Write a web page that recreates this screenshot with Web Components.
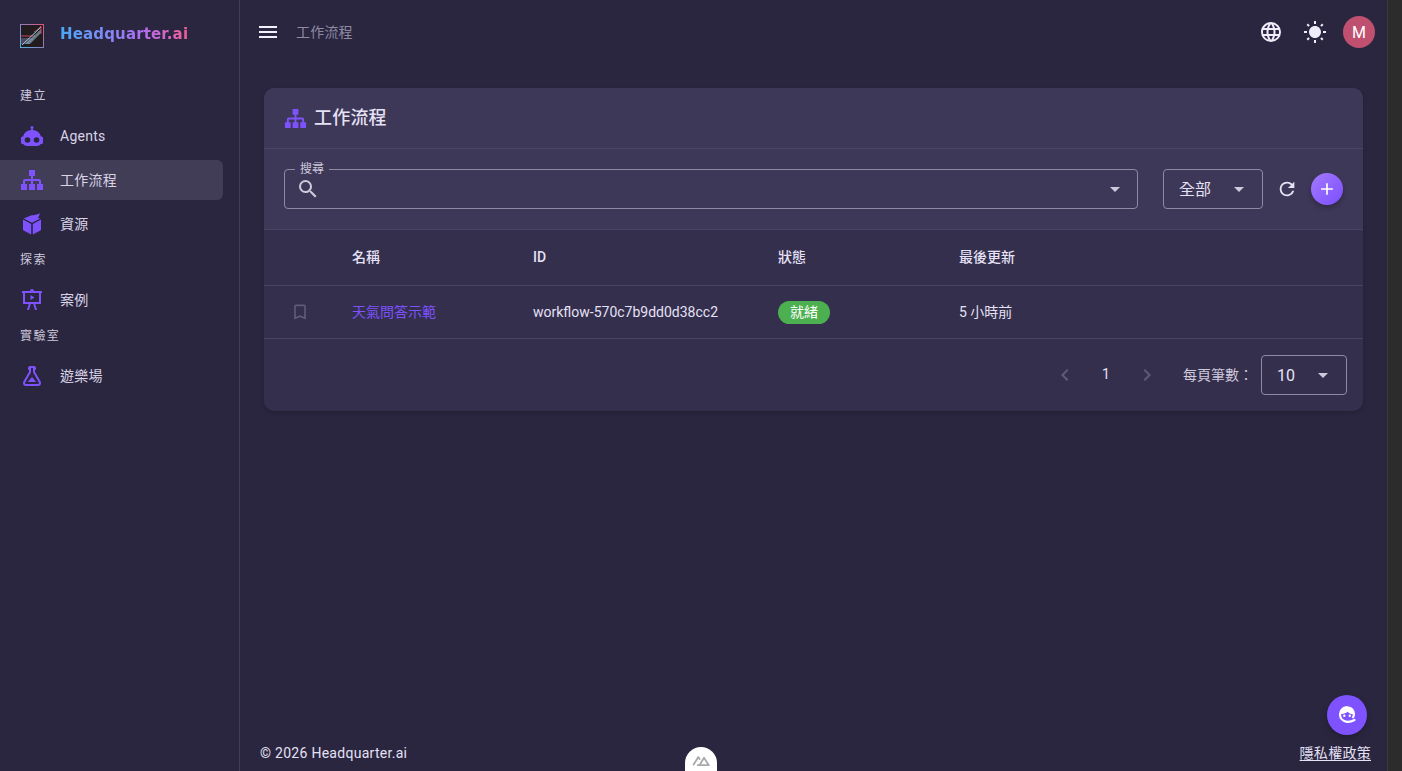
<!DOCTYPE html>
<html lang="zh-Hant"><head><meta charset="utf-8"><title>工作流程</title>
<style>
html,body{margin:0;height:100%;overflow:hidden;background:#2a2640}
body{font-family:Roboto,"Noto Sans CJK TC",sans-serif;color:#e6e1f5}
</style></head><body>
<app-shell>
  <side-nav slot="nav"></side-nav>
  <top-bar slot="top"></top-bar>
  <workflow-card slot="main"></workflow-card>
  <page-footer slot="footer"></page-footer>
</app-shell>
<script>
const P={
 sitemap:"M9,2V8H11V11H5C3.89,11 3,11.89 3,13V16H1V22H7V16H5V13H11V16H9V22H15V16H13V13H19V16H17V22H23V16H21V13C21,11.89 20.1,11 19,11H13V8H15V2H9Z",
 robot:"M12,2A1.5,1.5 0 0,1 13.5,3.5C13.5,4 13.2,4.5 12.8,4.8V6.1C17,6.5 20.2,9.2 20.8,12.5H21.5A1.5,1.5 0 0,1 23,14V18.5A1.5,1.5 0 0,1 21.5,20H20.8C20,21.3 18.5,22 17,22H7C5.5,22 4,21.3 3.2,20H2.5A1.5,1.5 0 0,1 1,18.5V14A1.5,1.5 0 0,1 2.5,12.5H3.2C3.8,9.2 7,6.5 11.2,6.1V4.8C10.8,4.5 10.5,4 10.5,3.5A1.5,1.5 0 0,1 12,2M7.5,13.2A2.8,2.8 0 1,0 7.5,18.8A2.8,2.8 0 1,0 7.5,13.2M16.5,13.2A2.8,2.8 0 1,0 16.5,18.8A2.8,2.8 0 1,0 16.5,13.2Z",
 cube:"M3,7.6L11.2,12V22.6L3.6,18.6C3.2,18.4 3,18 3,17.6V7.6M21,7.6V17.6C21,18 20.8,18.4 20.4,18.6L12.8,22.6V12L21,7.6M11.5,3.2C14,3.2 17,2.8 20,1.2C19.6,3 18.8,4.6 17.8,5.8L20.2,6.4L12,10.7L3.8,6.4L11.5,3.2Z",
 present:"M2,3H10A2,2 0 0,1 12,1A2,2 0 0,1 14,3H22V5H21V16H15.25L17,22H15L13.25,16H10.75L9,22H7L8.75,16H3V5H2V3M5,5V14H19V5H5M10.5,7L14.5,9.5L10.5,12V7Z",
 flask:"M5,19A1,1 0 0,0 6,20H18A1,1 0 0,0 19,19C19,18.79 18.93,18.59 18.82,18.43L13,8.35V4H11V8.35L5.18,18.43C5.07,18.59 5,18.79 5,19M6,22A3,3 0 0,1 3,19C3,18.4 3.18,17.84 3.5,17.37L9,7.81V6A1,1 0 0,1 8,5V4A2,2 0 0,1 10,2H14A2,2 0 0,1 16,4V5A1,1 0 0,1 15,6V7.81L20.5,17.37C20.82,17.84 21,18.4 21,19A3,3 0 0,1 18,22H6M12,13L16.27,18H7.73L12,13Z",
 menu:"M3,6H21V8H3V6M3,11H21V13H3V11M3,16H21V18H3V16Z",
 web:"M16.36,14C16.44,13.34 16.5,12.68 16.5,12C16.5,11.32 16.44,10.66 16.36,10H19.74C19.9,10.64 20,11.31 20,12C20,12.69 19.9,13.36 19.74,14M14.59,19.56C15.19,18.45 15.65,17.25 15.97,16H18.92C17.96,17.65 16.43,18.93 14.59,19.56M14.34,14H9.66C9.56,13.34 9.5,12.68 9.5,12C9.5,11.32 9.56,10.65 9.66,10H14.34C14.43,10.65 14.5,11.32 14.5,12C14.5,12.68 14.43,13.34 14.34,14M12,19.96C11.17,18.76 10.5,17.43 10.09,16H13.91C13.5,17.43 12.83,18.76 12,19.96M8,8H5.08C6.03,6.34 7.57,5.06 9.4,4.44C8.8,5.55 8.35,6.75 8,8M5.08,16H8C8.35,17.25 8.8,18.45 9.4,19.56C7.57,18.93 6.03,17.65 5.08,16M4.26,14C4.1,13.36 4,12.69 4,12C4,11.31 4.1,10.64 4.26,10H7.64C7.56,10.66 7.5,11.32 7.5,12C7.5,12.68 7.56,13.34 7.64,14M12,4.03C12.83,5.23 13.5,6.57 13.91,8H10.09C10.5,6.57 11.17,5.23 12,4.03M18.92,8H15.97C15.65,6.75 15.19,5.55 14.59,4.44C16.43,5.07 17.96,6.34 18.92,8M12,2C6.47,2 2,6.5 2,12A10,10 0 0,0 12,22A10,10 0 0,0 22,12A10,10 0 0,0 12,2Z",
 sun:"M3.55 19.09L4.96 20.5L6.76 18.71L5.34 17.29M12 6C8.69 6 6 8.69 6 12S8.69 18 12 18 18 15.31 18 12C18 8.68 15.31 6 12 6M20 13H23V11H20M17.24 18.71L19.04 20.5L20.45 19.09L18.66 17.29M20.45 5L19.04 3.6L17.24 5.39L18.66 6.81M13 1H11V4H13M6.76 5.39L4.96 3.6L3.55 5L5.34 6.81L6.76 5.39M1 13H4V11H1M13 20H11V23H13",
 refresh:"M17.65,6.35C16.2,4.9 14.21,4 12,4A8,8 0 0,0 4,12A8,8 0 0,0 12,20C15.73,20 18.84,17.45 19.73,14H17.65C16.83,16.33 14.61,18 12,18A6,6 0 0,1 6,12A6,6 0 0,1 12,6C13.66,6 15.14,6.69 16.22,7.78L13,11H20V4L17.65,6.35Z",
 search:"M9.5,3A6.5,6.5 0 0,1 16,9.5C16,11.11 15.41,12.59 14.44,13.73L14.71,14H15.5L20.5,19L19,20.5L14,15.5V14.71L13.73,14.44C12.59,15.41 11.11,16 9.5,16A6.5,6.5 0 0,1 3,9.5A6.5,6.5 0 0,1 9.5,3M9.5,5C7,5 5,7 5,9.5C5,12 7,14 9.5,14C12,14 14,12 14,9.5C14,7 12,5 9.5,5Z",
 bookmark:"M17,18L12,15.82L7,18V5H17M17,3H7A2,2 0 0,0 5,5V21L12,18L19,21V5C19,3.89 18.1,3 17,3Z",
 down:"M7,10L12,15L17,10H7Z",
 left:"M15.41,16.58L10.83,12L15.41,7.41L14,6L8,12L14,18L15.41,16.58Z",
 right:"M8.59,16.58L13.17,12L8.59,7.41L10,6L16,12L10,18L8.59,16.58Z",
 plus:"M19,13H13V19H11V13H5V11H11V5H13V11H19V13Z"
};
const ic=(n,s,c='currentColor')=>`<svg width="${s}" height="${s}" viewBox="0 0 24 24" fill="${c}" style="display:block;flex:none"><path d="${P[n]}"/></svg>`;
function def(name,html){customElements.define(name,class extends HTMLElement{
  constructor(){super();this.attachShadow({mode:'open'}).innerHTML=typeof html==='function'?html(this):html}
});}
const ACC='#7e52ff', LINE='#4a4464', HEAD='#3e3858';

def('app-shell',`<style>
:host{display:flex;height:771px;width:1402px;overflow:hidden;position:relative;background:#2a2640}
.nav{width:240px;flex:none;box-sizing:border-box;border-right:1px solid #423d58}
.col{flex:1;min-width:0;display:flex;flex-direction:column}
.main{padding:24px 24px 0;flex:1}
.bar{width:15px;flex:none;box-sizing:border-box;background:#2c2c2c;border-left:1px solid #3a3a3a}
</style>
<div class="nav"><slot name="nav"></slot></div>
<div class="col"><slot name="top"></slot><div class="main"><slot name="main"></slot></div><slot name="footer"></slot></div>
<div class="bar"></div>
<help-fab></help-fab><nuxt-badge></nuxt-badge>`);

def('help-fab',`<style>
:host{position:absolute;left:1327px;top:695px;width:40px;height:40px;border-radius:50%;background:${ACC};display:flex;align-items:center;justify-content:center;box-shadow:0 3px 6px rgba(0,0,0,.25)}
</style><svg width="24" height="24" viewBox="0 0 24 24" style="display:block"><path d="M12,4.300C7.800,4.300 5,7.500 5,11.500C5,15.200 7.800,18.300 12,18.800" fill="none" stroke="#fff" stroke-width="2.200"/><path d="M12,3.200C16.800,3.200 20,6.800 20,11C20,12.800 19.400,14.300 18.400,15.500L16.600,14.500C17.600,13.500 17.800,12.300 17.800,11.300C15.700,11 13.900,10 12.600,8.700C11,10 9.300,10.800 6.400,11L5,11C5,6.800 8,3.200 12,3.200Z" fill="#fff"/><circle cx="9.300" cy="12.800" r="1.200" fill="#fff"/><circle cx="14.800" cy="12.800" r="1.200" fill="#fff"/><path d="M12,18.800C14.500,19 17,18.400 19.500,17" fill="none" stroke="#fff" stroke-width="2.200" stroke-linecap="round"/></svg>`);
def('nuxt-badge',`<style>
:host{position:absolute;left:685px;top:747px;width:32px;height:24px;border-radius:16px 16px 0 0;background:#fff;display:flex;justify-content:center;padding-top:8px;box-sizing:border-box}
</style><svg width="18" height="12" viewBox="0 0 18 12" fill="none" stroke="#aaa" stroke-width="1.8" stroke-linejoin="round"><path d="M1.2,10.2L6.3,2.1L8,4.8M5,10.2H16.8L12,2.8L7.5,10.2"/></svg>`);

def('brand-logo',`<style>
:host{display:flex;align-items:center;gap:16px;height:72px;padding-left:20px}
.t{font:700 15px/20px "DejaVu Sans",sans-serif;background:linear-gradient(90deg,#4aa8f5 0%,#7b8cf5 32%,#b06ef0 65%,#f55f96 100%);-webkit-background-clip:text;background-clip:text;color:transparent;letter-spacing:.15px;padding-bottom:5px}
</style>
<svg width="24" height="24" viewBox="0 0 24 24" style="flex:none"><defs><linearGradient id="g" x1="0" y1="1" x2="1" y2="0"><stop offset="0" stop-color="#52b4e0"/><stop offset=".5" stop-color="#8a7fc0"/><stop offset="1" stop-color="#e0557f"/></linearGradient></defs>
<rect x=".5" y=".5" width="23" height="23" fill="#211c1e" stroke="url(#g)"/>
<path d="M1,12H15" stroke="#c9455f" stroke-width="1"/><path d="M1,15H13M1,17H11M1,19H9" stroke="#8f8fc0" stroke-width=".8" fill="none"/>
<path d="M2,21L21,3" stroke="#a9d3e6" stroke-width="1"/><path d="M5,20L21,5V9L10,20Z" fill="#9fc6d8" opacity=".55"/><path d="M14,8C17,6 19,4 21,2V10" stroke="#c9556f" stroke-width=".8" fill="none"/></svg>
<span class="t">Headquarter.ai</span>`);

def('nav-label',`<style>:host{display:block;height:22px;line-height:25px;padding-left:20px;font-size:12px;letter-spacing:1.4px;color:#cfc9dc}</style><slot></slot>`);
def('nav-item',el=>`<style>
:host{display:flex;align-items:center;height:40px;width:223px;box-sizing:border-box;padding-left:20px;gap:16px;font-size:14px;letter-spacing:.25px;color:#d9d4e6;border-radius:0 6px 6px 0}
:host([active]){background:#423d56}
:host(:not([latin])) span{padding-bottom:2px}
</style>${ic(el.getAttribute('icon'),24,ACC)}<span><slot></slot></span>`);
def('side-nav',`<style>
:host{display:block}
.l{display:flex;flex-direction:column;gap:4px;padding-top:12px}
nav-label{margin-bottom:6px}
</style>
<brand-logo></brand-logo>
<div class="l">
<nav-label>建立</nav-label>
<nav-item icon="robot" latin>Agents</nav-item>
<nav-item icon="sitemap" active>工作流程</nav-item>
<nav-item icon="cube">資源</nav-item>
<nav-label>探索</nav-label>
<nav-item icon="present">案例</nav-item>
<nav-label>實驗室</nav-label>
<nav-item icon="flask">遊樂場</nav-item>
</div>`);

def('top-bar',`<style>
:host{display:flex;align-items:center;height:64px;flex:none;padding:0 12px 0 16px;color:#f0ecfa}
.c{margin-left:16px;font-size:14px;color:#8f8aa3;letter-spacing:.2px;padding-bottom:2px}
.sp{flex:1}
.a{width:32px;height:32px;border-radius:50%;background:#bf5070;color:#fff;display:flex;align-items:center;justify-content:center;font-size:16px}
.r{display:flex;align-items:center}
</style>${ic('menu',24,'#f4f1fb')}<span class="c">工作流程</span><span class="sp"></span>
<div class="r">${ic('web',24)}<span style="width:20px"></span>${ic('sun',24)}<span style="width:16px"></span><div class="a">M</div></div>`);

def('outlined-select',el=>`<style>
:host{display:flex;align-items:center;box-sizing:border-box;height:40px;border:1px solid #8f8aa3;border-radius:4px;padding:0 11px 0 15px;font-size:16px;color:#e6e1f5;justify-content:space-between}
:host([cjk]) span{padding-bottom:2px}
</style><span><slot></slot></span>${ic('down',24,'#cfc9dc')}`);

def('search-field',`<style>
:host{display:flex;flex:1;align-items:center;position:relative;box-sizing:border-box;height:40px;border:1px solid #8f8aa3;border-radius:4px;padding:0 10px 0 11px;justify-content:space-between}
.lb{position:absolute;left:10px;top:-9px;padding:0 5px;background:${HEAD};font-size:12px;line-height:16px;color:#cfc9dc}
svg{color:#cfc9dc}
</style><span class="lb">搜尋</span>${ic('search',24)}${ic('down',24,'#cfc9dc')}`);

def('workflow-card',`<style>
:host{display:block;border-radius:10px;overflow:hidden;background:#342f4d;box-shadow:0 2px 4px rgba(0,0,0,.18);width:1099px}
.h{height:61px;box-sizing:border-box;background:${HEAD};display:flex;align-items:center;padding-left:20px;gap:7px;font-size:18px;font-weight:500;letter-spacing:.2px;color:#e6e1f5;border-bottom:1px solid ${LINE}}
.h span{padding-bottom:5px}
.f{height:81px;box-sizing:border-box;background:${HEAD};display:flex;align-items:center;padding:0 20px;border-bottom:1px solid ${LINE}}
.g{display:grid;grid-template-columns:88px 181px 245px 181px 1fr;align-items:center}
.th{height:56px;font-size:14px;font-weight:500;color:#e6e1f5;border-bottom:1px solid ${LINE};box-sizing:border-box}
.th span{padding-bottom:3px}
.th .la{padding-bottom:1px}
.tr{height:53px;font-size:14px;color:#e6e1f5;border-bottom:1px solid ${LINE};box-sizing:border-box}
.bm{padding-left:26px;color:#5f5a75}
.lnk{color:${ACC}}
.up{padding-bottom:2px}
.chip{display:inline-block;background:#4caf50;color:#fff;border-radius:12px;width:52px;text-align:center;height:23px;line-height:23px}
.p{height:72px;display:flex;align-items:center;justify-content:flex-end;padding-right:16px;box-sizing:border-box;font-size:14px;color:#cfc9dc}
.n{color:#e6e1f5;width:58px;text-align:center;margin-top:-2px}
.plus{width:32px;height:32px;border-radius:50%;background:linear-gradient(135deg,#a27bff,#7c4dff);display:flex;align-items:center;justify-content:center;box-shadow:0 3px 5px rgba(0,0,0,.25)}
</style>
<div class="h">${ic('sitemap',23,ACC)}<span>工作流程</span></div>
<div class="f"><search-field></search-field><span style="width:25px"></span>
<outlined-select cjk style="width:100px">全部</outlined-select>
<span style="width:13px"></span><span style="color:#e6e1f5">${ic('refresh',22)}</span><span style="width:13px"></span>
<div class="plus">${ic('plus',20,'#fff')}</div></div>
<div class="g th"><span></span><span>名稱</span><span class="la">ID</span><span>狀態</span><span>最後更新</span></div>
<div class="g tr"><span class="bm">${ic('bookmark',20)}</span><span class="lnk up">天氣問答示範</span><span>workflow-570c7b9dd0d38cc2</span><span><span class="chip">就緒</span></span><span class="up">5 小時前</span></div>
<div class="p">${ic('left',24,'#5f5a75')}<span class="n">1</span>${ic('right',24,'#5f5a75')}<span style="width:24px"></span><span class="up">每頁筆數：</span><span style="width:8px"></span><outlined-select style="width:86px">10</outlined-select></div>`);

def('page-footer',`<style>
:host{display:flex;justify-content:space-between;align-items:center;height:36px;flex:none;padding:0 16px 0 20px;font-size:14px;letter-spacing:.28px;color:#e6e1f5;box-sizing:border-box}
u{text-underline-offset:2px;padding-bottom:2px}
</style><span>© 2026 Headquarter.ai</span><u>隱私權政策</u>`);
</script>
</body></html>
